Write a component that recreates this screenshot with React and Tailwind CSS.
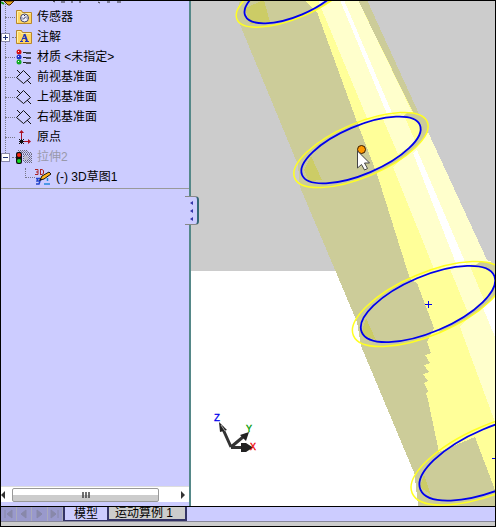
import { useState } from 'react';

const RINGS = [
  { cx: 294, cy: -5, inner: [53, 21], outer: [62, 23] },
  { cx: 361, cy: 150, inner: [64, 24], outer: [72, 27] },
  { cx: 428, cy: 304, inner: [72, 28], outer: [81, 31] },
  { cx: 495, cy: 458, inner: [81, 31], outer: [90, 34] },
];

function SensorIcon() {
  return (
    <svg viewBox="0 0 16 16" className="size-4 shrink-0" aria-hidden="true">
      <path d="M.5 14.5v-13h5l1 2h9v11z" fill="#ffd766" stroke="#b8862b" />
      <path d="M1.5 13.5v-11h3l1 2h9" fill="none" stroke="#fff3a8" />
      <circle cx="8.500" cy="9" r="4" fill="#eef0ff" stroke="#444466" />
      <path d="m7 10.500 3-3M8.500 6v1M5.500 9h1M10.500 9h1" stroke="#222244" />
    </svg>
  );
}

function NoteIcon() {
  return (
    <svg viewBox="0 0 16 16" className="size-4 shrink-0" aria-hidden="true">
      <path d="M.5 14.5v-13h5l1 2h9v11z" fill="#ffd766" stroke="#b8862b" />
      <path d="M1.5 13.5v-11h3l1 2h9" fill="none" stroke="#fff3a8" />
      <path d="M4 12.500h3M9 12.500h4M6.500 9.500h3.500" stroke="#2233bb" />
      <path d="m5.500 12 3-7" stroke="#2233bb" />
      <path d="m8.500 5 2.500 7" stroke="#2233bb" strokeWidth="2" />
    </svg>
  );
}

function MaterialIcon() {
  return (
    <svg viewBox="0 0 16 16" className="size-4 shrink-0" aria-hidden="true">
      <circle cx="3" cy="3" r="2.5" fill="#d41111" />
      <circle cx="3" cy="8" r="2.5" fill="#2233cc" />
      <circle cx="3" cy="13" r="2.5" fill="#11aa22" />
      <path d="M2 2.500h1M2 7.500h1M2 12.500h1" stroke="#fff" />
      <path d="M7 3.500h3M7 8.500h3M7 13.500h3" stroke="#222" />
      <path d="M10 4h5M10 9h5M10 14h5" stroke="#222" strokeWidth="1.5" />
    </svg>
  );
}

function PlaneIcon() {
  return (
    <svg viewBox="0 0 16 16" className="size-4 shrink-0" aria-hidden="true">
      <path
        d="M.5 8.500 7.500 1.500l7 7-7 6zM1 1l3.500 3.500M11 11l4 4"
        fill="none"
        stroke="#111"
      />
    </svg>
  );
}

function OriginIcon() {
  return (
    <svg viewBox="0 0 16 16" className="size-4 shrink-0" aria-hidden="true">
      <path d="M5.5 11V2M7 12.5h7" stroke="#aa1122" />
      <path d="M3 4 5.5 1 8 4zM12 10l3 2.5-3 2.5z" fill="#aa1122" />
      <path d="m3 10 5 5M8 10l-5 5M3 12.5h5M5.5 10v5" stroke="#111" />
    </svg>
  );
}

function ExtrudeIcon() {
  return (
    <svg viewBox="0 0 16 16" className="size-4 shrink-0" aria-hidden="true">
      <path
        d="M2 1.500h10M4 3.500h12M7 5.500h9M7 7.500h9M7 9.500h9M7 11.500h9M9 13.500h7"
        stroke="#666677"
        strokeDasharray="1 1"
      />
      <path
        d="M3 2.500h10M7 4.500h9M8 6.500h8M8 8.500h8M8 10.500h8M8 12.500h8"
        stroke="#888899"
        strokeDasharray="1 1"
      />
      <rect x="8" y="7" width="4" height="4" fill="#bbbbcc" />
      <rect x="0" y="3" width="6" height="12" rx="2" fill="#111" />
      <circle cx="3" cy="6" r="2" fill="#ff2211" />
      <circle cx="3" cy="12" r="2" fill="#11dd22" />
    </svg>
  );
}

function SketchIcon() {
  return (
    <svg viewBox="0 0 16 16" className="size-4 shrink-0" aria-hidden="true">
      <path
        d="M0 .5h3v5H0M1 3h2M5.500 0v5.500M5 .5h2l1.500 1v3l-1.500 1H5"
        fill="none"
        stroke="#aa2222"
      />
      <path d="M1 9.500h4M3 9l-1 3h3l-1 3H1" fill="none" stroke="#2244cc" strokeWidth="1.500" />
      <path d="M12.500 9v3M9 15h6" fill="none" stroke="#2288dd" strokeWidth="1.500" />
      <path d="m5 11 2-4 7-4 2 2-7 5z" fill="#ffb61e" stroke="#111" />
      <path d="m4 12 1.500-3 1.500 2z" fill="#111" />
    </svg>
  );
}

const TREE = [
  { label: '传感器', Icon: SensorIcon },
  { label: '注解', Icon: NoteIcon, toggle: '+' },
  { label: '材质 <未指定>', Icon: MaterialIcon },
  { label: '前视基准面', Icon: PlaneIcon },
  { label: '上视基准面', Icon: PlaneIcon },
  { label: '右视基准面', Icon: PlaneIcon },
  { label: '原点', Icon: OriginIcon },
  { label: '拉伸2', Icon: ExtrudeIcon, toggle: '-', dimmed: true },
];

function TreeRow({ item }) {
  const { label, Icon, toggle, dimmed } = item;
  return (
    <li className="flex h-5 items-center">
      <span className="flex w-[15px] shrink-0 items-center">
        {toggle ? (
          <>
            <button
              type="button"
              aria-label={toggle === '+' ? 'Expand' : 'Collapse'}
              className="flex size-[9px] shrink-0 items-center justify-center border border-[#8888aa] bg-white"
            >
              <svg viewBox="0 0 7 7" className="size-[7px] shrink-0" aria-hidden="true">
                <path
                  d={toggle === '+' ? 'M1 3.5h5M3.5 1v5' : 'M1 3.5h5'}
                  stroke="#223377"
                />
              </svg>
            </button>
            <span className="ml-0.5 w-1 border-t border-dotted border-[#777788]" />
          </>
        ) : (
          <span className="ml-1 w-2.5 border-t border-dotted border-[#777788]" />
        )}
      </span>
      <Icon />
      <span className={dimmed ? 'ml-[5px] text-[#9999aa]' : 'ml-[5px]'}>{label}</span>
    </li>
  );
}

function FeatureTree() {
  return (
    <div className="relative pt-1.5 text-[12px] leading-5 whitespace-nowrap">
      <span className="absolute top-0 left-1 h-[156px] border-l border-dotted border-[#777788]" />
      {/* bottom edge of the root part row, scrolled off the top */}
      <svg
        viewBox="0 0 130 5"
        className="absolute top-0 left-0 h-[5px] w-[130px]"
        aria-hidden="true"
      >
        <path d="M3 0h10l-4 4H7z" fill="#e5a51c" stroke="#442200" />
        <path d="M0 1l3 2" stroke="#119911" strokeWidth="2" />
        <path
          d="M52 0l2 1M60 1h4M70 1h2M78 1h2M97 1l2 1M106 1h3M116 1h4"
          stroke="#333"
        />
      </svg>
      <ul className="relative">
        {TREE.map((item) => (
          <TreeRow key={item.label} item={item} />
        ))}
        <li className="flex h-5 items-center">
          <span className="ml-6 h-2.5 w-2.5 -translate-y-1 border-b border-l border-dotted border-[#777788]" />
          <SketchIcon />
          <span className="ml-[5px]">(-) 3D草图1</span>
        </li>
      </ul>
      <div className="mt-px border-t border-[#999999]" />
    </div>
  );
}

function TreeScrollbar() {
  return (
    <div className="flex h-4 items-center border-t border-[#dddddd] bg-white">
      <button type="button" aria-label="Scroll left" className="flex w-[11px] items-center">
        <svg viewBox="0 0 4 8" className="h-2 w-1" aria-hidden="true">
          <path d="M4 0v8L0 4z" fill="#333" />
        </svg>
      </button>
      <div className="flex h-3.5 w-[147px] items-center justify-center rounded-xs border border-[#999999] bg-linear-to-b from-white from-50% to-[#cccccc] to-50%">
        <svg viewBox="0 0 8 6" className="h-1.5 w-2" aria-hidden="true">
          <path d="M1 0v6M4 0v6M7 0v6" stroke="#444" strokeWidth="1.5" />
        </svg>
      </div>
      <button type="button" aria-label="Scroll right" className="mr-1 ml-auto">
        <svg viewBox="0 0 4 8" className="h-2 w-1" aria-hidden="true">
          <path d="M0 0v8l4-4z" fill="#333" />
        </svg>
      </button>
    </div>
  );
}

function SplitterHandle() {
  return (
    <button
      type="button"
      aria-label="Collapse panel"
      className="absolute top-[195px] left-full z-10 -ml-1 flex h-[29px] w-[14px] flex-col items-center justify-center gap-1 rounded-r-sm border border-l-0 border-[#888888] border-r-2 border-r-[#336677] bg-[#ccccff]"
    >
      {[0, 1, 2].map((i) => (
        <svg key={i} viewBox="0 0 3 4" className="h-1 w-[3px]" aria-hidden="true">
          <path d="M3 0v4L0 2z" fill="#3333aa" />
        </svg>
      ))}
    </button>
  );
}

function Ring({ ring }) {
  const { cx, cy } = ring;
  const [a, b] = ring.inner;
  const [oa, ob] = ring.outer;
  return (
    <g transform={`rotate(-23 ${cx} ${cy})`} fill="none">
      {/* shaded rim along the lower right */}
      <path
        d={`M${cx} ${cy + ob}A${oa} ${ob} 0 0 0 ${cx + oa * 0.8} ${cy - ob * 0.6}L${cx + a * 0.8} ${cy - b * 0.6}A${a} ${b} 0 0 1 ${cx} ${cy + b}z`}
        fill="#cccc99"
      />
      <ellipse cx={cx} cy={cy} rx={oa} ry={ob} stroke="#ffff22" strokeWidth="1.5" />
      <ellipse cx={cx} cy={cy} rx={a} ry={b} stroke="#0000ee" strokeWidth="1.8" />
    </g>
  );
}

function Model() {
  return (
    <svg
      viewBox="191 1 304 505"
      preserveAspectRatio="xMinYMin slice"
      className="absolute inset-0 size-full"
      role="img"
      aria-label="3D model"
    >
      <g shapeRendering="crispEdges">
        <path
          d="M236 15 298 165 300 187 357 322 361 346 415 475 418 506H495V280L367 0H240z"
          fill="#cccc99"
        />
        <path
          d="M304 0 317 12 357 122 377 174 404 260 410 279 417 283 434 328 427 342 431 353 425 355 430 363 424 365 429 372 423 374 428 381 424 383 428 391 426 393 428 400 439 452 475 437 495 490V280L358 0z"
          fill="#ffff99"
        />
        <path d="M318 0 322 10 367 118 412 112 358 0z" fill="#ffffcc" />
        <path d="M383 119 398 154 416 143 404 115z" fill="#ffffcc" />
        <path d="M393 167 434 269 492 262 487 260 428 132 416 147z" fill="#ffffcc" />
        <path d="M450 269 468 313 484 300 470 266z" fill="#ffffcc" />
        <path d="M460 327 495 422V290z" fill="#ffffcc" />
        <path
          d="M340 0 387 114 392 113 344 0zM413 153 457 266 466 264 417 150zM483 308 495 337V296z"
          fill="#fff"
        />
        <path d="M439 452 475 437 495 490V506H418L415 478z" fill="#cccc99" />
        <path d="M475 437 495 430V490z" fill="#ffff99" />
        <path
          d="M245 8 264 0 270 22 250 24zM304 170 311 156 322 180 309 181zM361 335 366 318 376 340zM420 487 424 474 431 495z"
          fill="#cccc66"
        />
      </g>
      {RINGS.map((ring) => (
        <Ring key={ring.cy} ring={ring} />
      ))}
      <path d="M425 304.5h7M428.5 301v7M492 458.5h4" stroke="#0000ee" />
      <circle cx="361.5" cy="149.5" r="4" fill="#ff9900" stroke="#331a00" />
      <path
        d="M357.5 151v17l4-3.5 3 5.5 3-1.5-3-5.5h5z"
        fill="#fff"
        stroke="#444"
      />
    </svg>
  );
}

function AxisTriad() {
  return (
    <svg
      viewBox="210 410 50 44"
      className="absolute bottom-[52px] left-[19px] h-11 w-[50px]"
      role="img"
      aria-label="Axes"
    >
      <path d="M231 447 222 427M231 447l12-10M231 447.5h15" stroke="#333" strokeWidth="3" />
      <path d="m219 422 8 8-7 2zM249 432l-3 9-6-6zM241 443h5l7 4.500-7 4.500h-5z" fill="#222" />
      <path d="m221 425 4 6" stroke="#aaa" />
      <g className="font-['Liberation_Mono'] text-[10px]">
        <text x="214" y="421" fill="#0000ee" stroke="#0000ee" strokeWidth=".3">Z</text>
        <text x="246" y="432" fill="#009900" stroke="#009900" strokeWidth=".3">Y</text>
        <text x="250" y="450" fill="#ee0000" stroke="#ee0000" strokeWidth=".3">X</text>
      </g>
    </svg>
  );
}

function Viewport() {
  return (
    <main className="relative min-w-0 flex-1 overflow-hidden bg-linear-to-b from-[#cccccc] from-[270px] to-white to-[270px]">
      <Model />
      <AxisTriad />
    </main>
  );
}

const NAV = [
  'M2 1v8M9 1v8L4 5z',
  'M8 1v8L3 5z',
  'M3 1v8l5-4z',
  'M2 1v8l5-4zM9 1v8',
];

function BottomTabs({ active, onSelect }) {
  return (
    <nav className="flex h-[15px] items-stretch border-t border-black bg-[#ccccff] text-[12px] leading-3">
      <div className="flex w-[62px] bg-[#9999cc]">
        {NAV.map((d) => (
          <button
            key={d}
            type="button"
            aria-label="Scroll tabs"
            className="flex flex-1 items-center justify-center border-r border-[#aaaabb]"
          >
            <svg viewBox="0 0 11 10" className="h-2.5 w-[11px]" aria-hidden="true">
              <path d={d} fill="#8888aa" stroke="#8888aa" />
            </svg>
          </button>
        ))}
      </div>
      {['模型', '运动算例 1'].map((tab) => (
        <button
          key={tab}
          type="button"
          onClick={() => onSelect(tab)}
          className={
            tab === active
              ? 'border-x-2 border-b border-[#333366] bg-[#ccccff] px-[9px]'
              : 'border-r-2 border-b-2 border-[#333366] bg-[#cccccc] pr-3 pl-1.5'
          }
        >
          {tab}
        </button>
      ))}
    </nav>
  );
}

export default function App() {
  const [tab, setTab] = useState('模型');

  return (
    <div className="flex h-screen flex-col border border-black bg-[#ccccff] font-['Liberation_Sans','Noto_Sans_CJK_SC',sans-serif] text-black">
      <div className="flex min-h-0 flex-1">
        <aside className="relative flex w-[190px] shrink-0 flex-col border-r-2 border-[#558888] bg-[#ccccff]">
          <FeatureTree />
          <div className="mt-auto pb-1">
            <TreeScrollbar />
          </div>
          <SplitterHandle />
        </aside>
        <Viewport />
      </div>
      <BottomTabs active={tab} onSelect={setTab} />
      <footer className="h-[5px] border-t border-[#888899] bg-[#cccccc]" />
    </div>
  );
}
